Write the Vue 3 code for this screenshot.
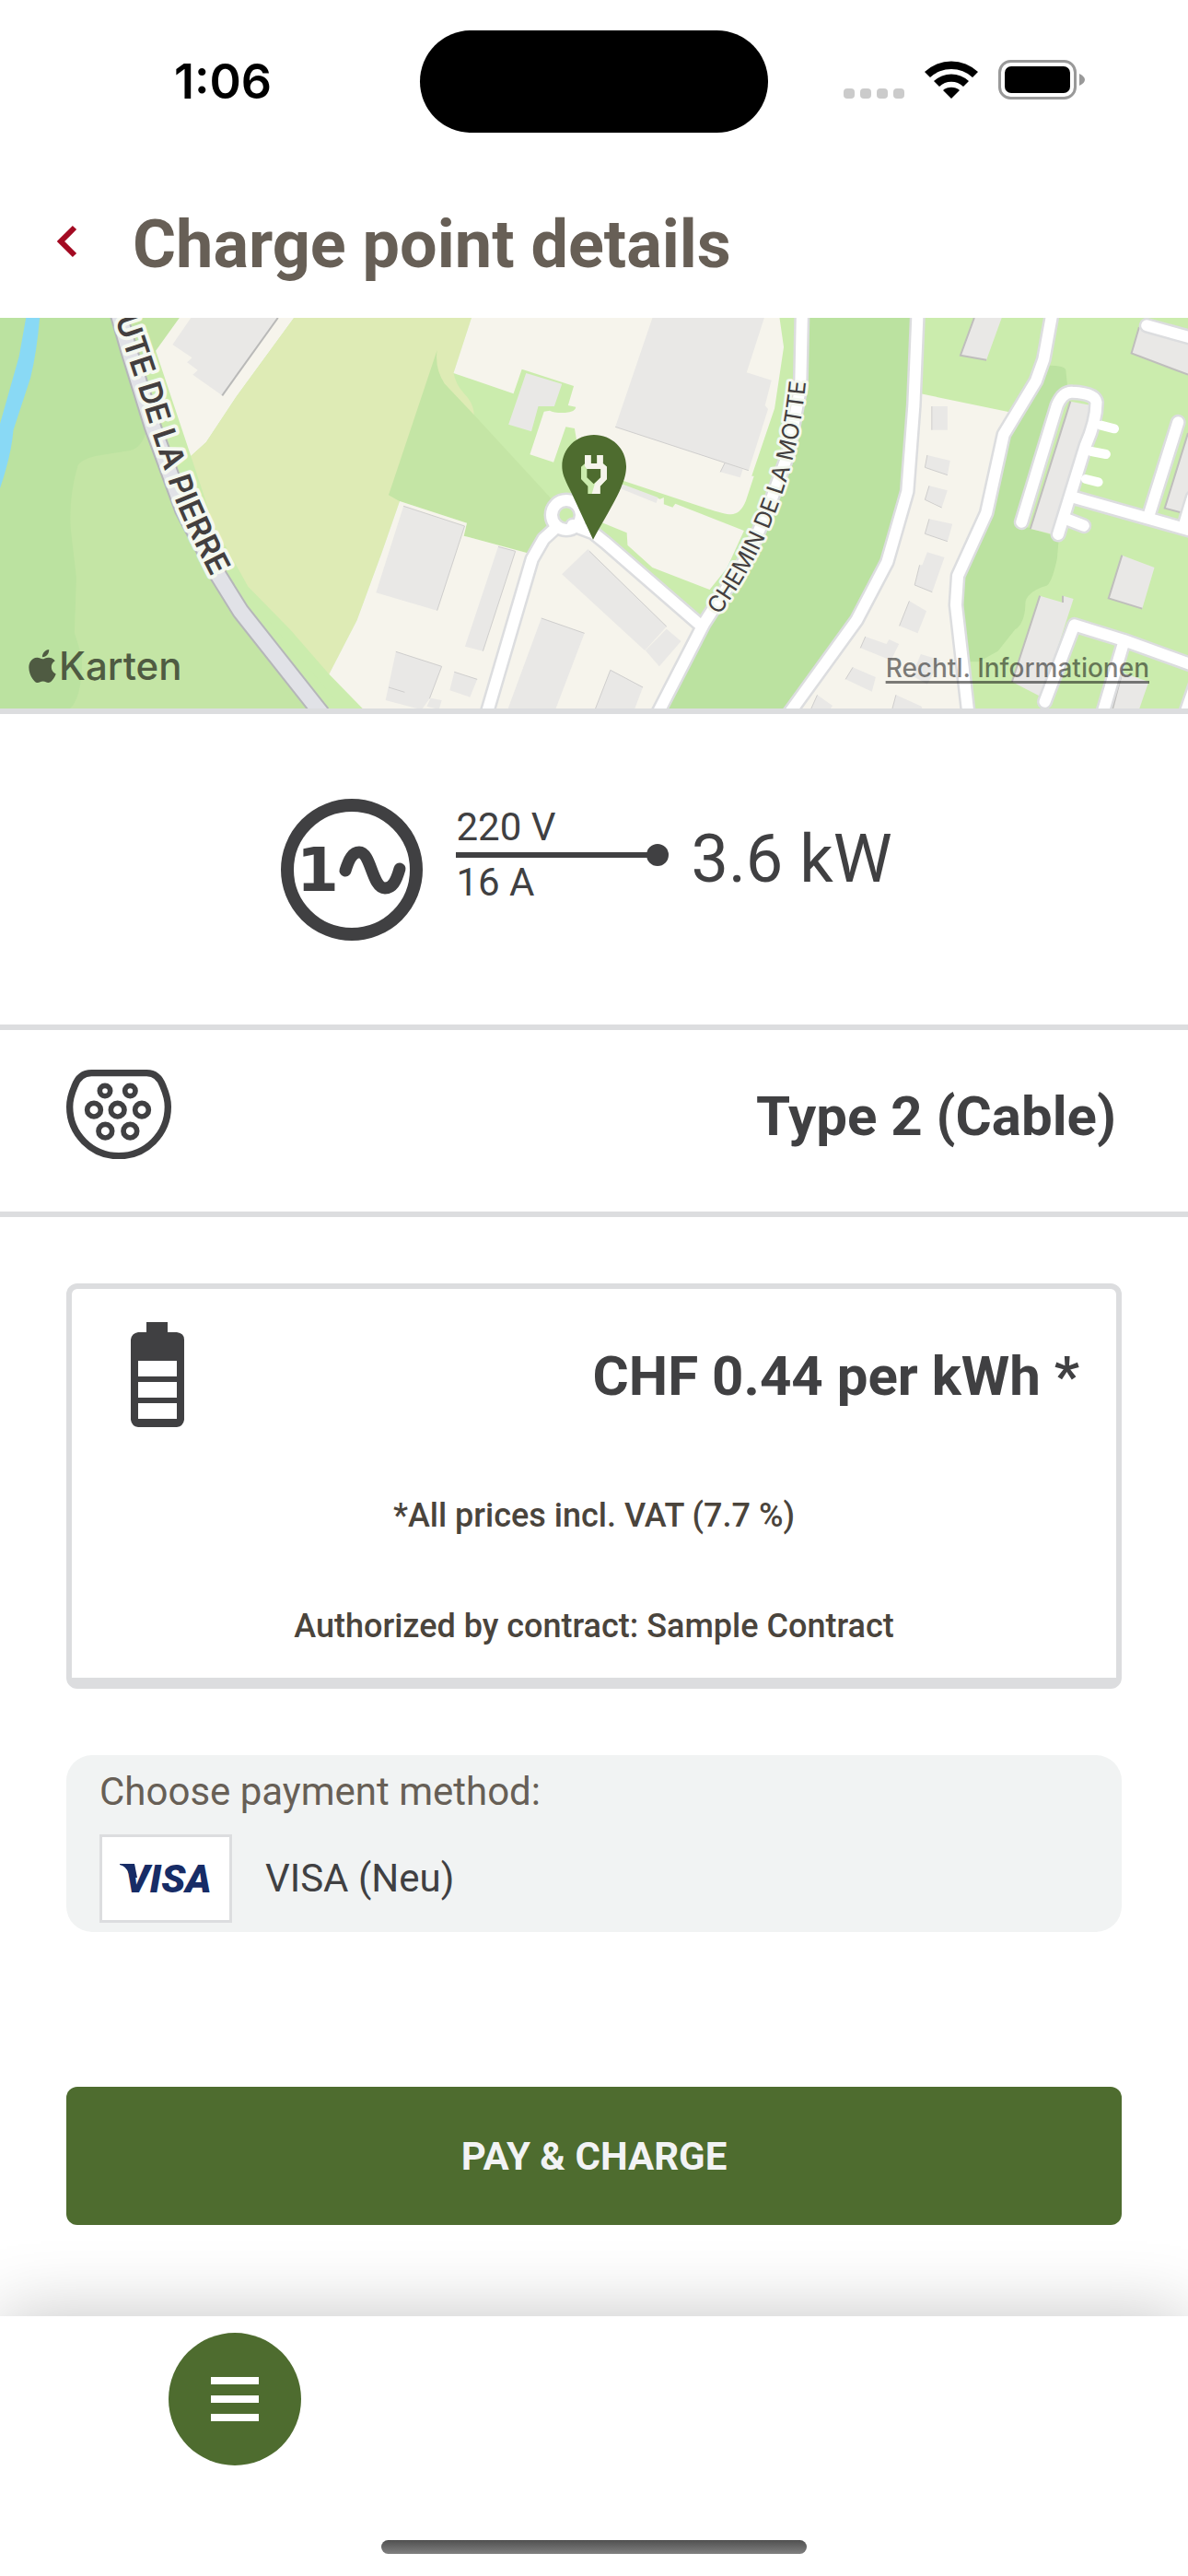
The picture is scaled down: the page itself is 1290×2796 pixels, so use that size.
<script setup>
const buildingsWest = [
  '500,15 728,15 582,268 505,200 518,185 490,160 503,145 452,102',
  '1378,195 1472,230 1452,303 1410,303 1392,385 1332,362',
  '1057,628 1217,693 1145,968 985,910',
  '1305,760 1350,775 1265,1100 1218,1085',
  '1418,993 1531,1042 1455,1290 1330,1290',
  '1037,1102 1157,1150 1125,1255 1105,1290 1085,1285 1010,1260',
  '1190,1168 1250,1192 1231,1250 1178,1228',
  '1128,1253 1157,1260 1150,1290 1118,1280',
  '1540,768 1746,1020 1689,1098 1472,850'
]

const buildingsEast = [
  '202,1028 240,1068 183,1150 147,1098',
  '55,1162 140,1218 118,1290 15,1290',
  '88,557 180,600 175,618 80,570',
  '165,15 458,15 412,193 477,218 460,300 468,312 417,512 68,370',
  '355,487 402,508 395,535 343,517',
  '897,303 938,303 938,380 897,380',
  '885,462 945,480 938,527 879,502',
  '890,562 938,577 923,633 905,620 879,607',
  '890,670 951,686 938,743 879,718',
  '885,778 930,795 898,908 852,885 865,820 872,820',
  '838,937 883,970 860,1042 812,1018',
  '723,1053 778,1077 785,1062 811,1077 790,1130 710,1090',
  '690,1153 750,1185 740,1232 671,1192',
  '868,1110 920,1130 885,1208 845,1180',
  '597,1243 637,1278 630,1290 580,1290',
  '803,1243 870,1280 872,1290 793,1290'
]

const blocksEast = [
  '1008,15 1080,15 1040,152 972,137',
  '1440,45 1568,100 1568,200 1420,130',
  '1260,287 1315,300 1300,420 1215,720 1155,702',
  '1395,788 1480,828 1448,962 1360,928',
  '1180,920 1240,942 1240,920 1268,930 1185,1250 1107,1200',
  '1568,390 1568,655 1507,635',
  '1395,1170 1465,1200 1440,1290 1370,1290'
]

const shadedEdges = [
  'M1008 15L972 137L1040 152',
  'M1440 45L1420 130L1568 200',
  'M1260 287L1155 702',
  'M1395 788L1360 928L1448 962',
  'M1180 920L1107 1200M1240 920V942',
  'M1568 390L1507 635L1568 655',
  'M1395 1170L1370 1290'
]

const roads = [
  'M557 0L553 240L520 460L470 630L420 780L300 1010L180 1300',
  'M860 0L850 300L833 580L780 810L700 1000L525 1300',
  'M1212 0L1190 150L1170 220L1085 395L1040 650L965 855L960 950L992 1300',
  'M-44 690L10 715L40 745L290 1015',
  'M-89 700L-120 735L-150 800L-268 1300',
  'M1132 680L1225 300Q1240 255 1265 257Q1325 260 1328 290Q1328 350 1300 430L1228 720',
  'M1250 670L1295 692',
  'M1270 600L1600 716M1465 660L1542 355M1558 690L1580 600',
  'M1193 1265L1270 1015L1400 1065L1600 1155M1400 1070L1345 1300M1590 1200L1562 1300',
  'M1460 40L1600 88'
]
const stubs = 'M1340 365L1375 376M1315 450L1353 459M1300 540L1333 550'
</script>

<template>
  <div class="page">
    <div class="status">
      <div class="time">1:06</div>
      <div class="island"></div>
      <div class="indicators">
        <svg width="66" height="43" viewBox="0 0 66 43" aria-hidden="true">
          <g fill="#cbcbcb">
            <rect x="0" y="31" width="12" height="11" rx="4" />
            <rect x="18" y="31" width="12" height="11" rx="4" />
            <rect x="36" y="31" width="12" height="11" rx="4" />
            <rect x="54" y="31" width="12" height="11" rx="4" />
          </g>
        </svg>
        <svg width="58" height="43" viewBox="0 0 58 43" aria-hidden="true">
          <path d="M0 13A42 42 0 0 1 58 13L52 19A34 34 0 0 0 6 19Z" />
          <path d="M10 23A28 28 0 0 1 48 23L42 29A19 19 0 0 0 16 29Z" />
          <path d="M20 33A14 14 0 0 1 38 33L29 42Z" />
        </svg>
        <svg width="94" height="43" viewBox="0 0 94 43" aria-hidden="true">
          <rect x="1.5" y="1.5" width="82" height="40" rx="12" fill="none" stroke="#999" stroke-width="3" />
          <rect x="7" y="7" width="71" height="29" rx="7" />
          <path d="M88 15Q94 18 94 21.500T88 28Z" fill="#999" />
        </svg>
      </div>
    </div>

    <header class="header">
      <button class="back" aria-label="Back">
        <svg width="22" height="36" viewBox="0 0 22 36"><path d="M19 3L4 18L19 33" fill="none" stroke="#a30a22" stroke-width="6" /></svg>
      </button>
      <h1>Charge point details</h1>
    </header>

    <section class="map">
      <svg class="map-canvas" viewBox="0 345 1290 424" preserveAspectRatio="xMidYMid slice" role="img" aria-label="Map">
        <rect x="0" y="345" width="1290" height="424" fill="#cbecad" />
        <g transform="translate(0 340) scale(.41454 .33333)">
          <path fill="#c4e5a5" d="M0 15H470L408 122L400 400L480 620L560 860L620 980L830 1290H0Z" />
          <path fill="#cbecad" d="M408 122L520 600L600 850L900 1290L820 1290L560 860L400 400L380 200Z" />
          <path fill="#bbe2a0" d="M0 15H300L385 380Q370 440 340 447L250 465Q205 480 203 500Q180 600 185 700L200 860L195 1040L215 1120Q215 1260 180 1290H0Z" />
          <path fill="#89d9f5" d="M68 15H104Q96 130 80 210L35 380Q30 460 0 570V360L50 140Z" />
          <path fill="#f6f4ec" d="M470 15H770L620 270L540 420L500 465L408 122Z" />
          <path fill="#deebb5" d="M770 15H1235L1188 195Q1195 235 1215 260Q1242 295 1242 335L1165 230L1018 592L1047 612L1000 780L935 1000L862 1175L760 1030L650 890L560 690L500 465L540 420L620 270Z" />
          <path fill="#c4e5a5" d="M1145 120Q1138 180 1165 230L1245 335L1445 605V700L1395 785L1215 725L1223 683L1047 612L1018 592Z" />
          <path fill="#f6f4ec" d="M1047 612L1223 683L1215 725L1395 785L1445 700L1560 715L1834 1020L1715 1290H952L862 1175L935 1000L1000 780Z" />
          <path fill="#f6f4ec" d="M1235 15H2042L2053 110L2029 310L1969 530H1975L1954 610Q1940 655 1914 655Q1900 655 1850 635L1632 545L1510 410L1505 375L1482 370L1450 485L1388 460L1425 320L1440 317Q1450 325 1480 324Q1510 320 1508 305L1488 300L1503 237L1367 182L1345 262L1188 195Z" />
          <polygon v-for="b in buildingsWest" :key="b" :points="b" fill="#e9e8e6" />
          <g class="fine" stroke="#b9b9b8" stroke-width="2"><path d="M728 15L582 268" /></g>
          <g class="fine" stroke="#cfcecd" stroke-width="1">
            <path d="M1057 628L1217 693L1145 968M1418 993L1531 1042M1037 1102L1157 1150L1125 1255M1190 1168L1250 1192M1305 760L1350 775L1265 1100M1018 1218L1060 1234" />
          </g>
        </g>
        <g transform="translate(640 340) scale(.41454 .33333)">
          <path fill="#f6f4ec" d="M60 545L185 605L195 600V622L218 632L225 620L405 708L360 830L315 900L165 828L100 755L98 715L20 675Z" />
          <path fill="#bbe2a0" d="M565 15H850L820 570L770 800L690 1000L515 1290H205L300 1020L430 790L500 560L555 260Z" />
          <path fill="#f6f4ec" d="M868 262L1100 322L1075 400L1030 650L950 850L945 950L975 1290H540L710 1000L790 800L845 580Z" />
          <path fill="#bbe2a0" d="M1205 170Q1245 170 1248 185L1252 235L1220 300L1130 690L1230 730L1225 800Q1210 885 1195 888Q1140 910 1142 950Q1140 1010 1115 1030L1070 1100L1020 1135H985L960 950L965 860L1050 640L1090 400L1190 220Z" />
          <polygon v-for="b in buildingsEast" :key="b" :points="b" fill="#e9e8e6" />
          <polygon v-for="b in blocksEast" :key="b" :points="b" fill="#e9e8e6" />
          <g class="fine" stroke="#bfbebc" stroke-width="2"><path v-for="e in shadedEdges" :key="e" :d="e" /></g>
          <g class="fine" stroke="#cfcecd" stroke-width="1">
            <path d="M68 370L417 512M355 487L343 517M897 303V380M885 462L879 502L938 527M890 562L879 607L923 633M890 670L879 718L938 743M865 820L852 885L898 908M838 937L812 1018M723 1053L710 1090M690 1153L671 1192M55 1162L15 1290M55 1162L140 1218M803 1243L793 1290M597 1243L580 1290M0 775L202 1020" />
          </g>
          <g class="road" stroke="#dcdddf" stroke-width="17"><path v-for="r in roads" :key="r" :d="r" /></g>
          <g class="road" stroke="#ffffff" stroke-width="10"><path :d="stubs" /></g>
        </g>
        <circle cx="615" cy="559" r="16" fill="none" stroke="#dcdddf" stroke-width="17" />
        <g transform="translate(640 340) scale(.41454 .33333)">
          <g class="road" stroke="#ffffff" stroke-width="12"><path v-for="r in roads" :key="r" :d="r" /></g>
        </g>
        <circle cx="615" cy="559" r="16" fill="none" stroke="#ffffff" stroke-width="12" />
        <g transform="translate(0 340) scale(.41454 .33333)" class="road">
          <path d="M310 0L340 130L400 370L480 640L570 850L630 970L840 1300" stroke="#b5b6b9" stroke-width="20" />
          <path d="M310 0L340 130L400 370L480 640L570 850L630 970L840 1300" stroke="#e1e2e7" stroke-width="16" />
        </g>
        <path id="label-west" fill="none" d="M125 346L138 385L153 430L168 478L186 532Q205 582 250 665" />
        <path id="label-east" fill="none" d="M781 668Q870 545 877 385" />
        <text class="road-name west"><textPath href="#label-west">UTE DE LA PIERRE</textPath></text>
        <text class="road-name east"><textPath href="#label-east">CHEMIN DE LA MOTTE</textPath></text>
        <g transform="translate(540 440) scale(.33333)">
          <path fill="#4e6c2f" fill-rule="evenodd" d="M312 437L243 288C222 245 211 225 211 198C211 140 258 96 315 96C372 96 420 140 420 198C420 225 412 247 398 280C380 320 340 385 312 437ZM285 162V190L273 200V240L295 263V288H335V263L357 240V200L344 189V162H325V189H305V162ZM292 207H337V235L314 256L292 235Z" />
          <path fill="#f6f4ec" d="M325 162H344V189L357 200V240L335 263V288H308L318 254L337 235V207H292L285 198L285 162H305V189H325Z" />
        </g>
      </svg>
      <div class="brand">
        <svg width="36" height="36" viewBox="0 0 24 24" aria-hidden="true"><path fill="#4f5b42" d="M12.152 6.896c-.948 0-2.415-1.078-3.960-1.040-2.040.027-3.910 1.183-4.961 3.014-2.117 3.675-.546 9.103 1.519 12.090 1.013 1.454 2.208 3.090 3.792 3.039 1.520-.065 2.090-.987 3.935-.987 1.831 0 2.350.987 3.960.948 1.637-.026 2.676-1.480 3.676-2.948 1.156-1.688 1.636-3.325 1.662-3.415-.039-.013-3.182-1.221-3.220-4.857-.026-3.040 2.480-4.494 2.597-4.559-1.429-2.090-3.623-2.324-4.390-2.376-2-.156-3.675 1.090-4.610 1.090zM15.530 3.830c.843-1.012 1.400-2.427 1.245-3.830-1.207.052-2.662.805-3.532 1.818-.780.896-1.454 2.338-1.273 3.714 1.338.104 2.715-.688 3.559-1.701" /></svg>
        <span>Karten</span>
      </div>
      <a class="legal" href="#">Rechtl. Informationen</a>
    </section>

    <section class="power">
      <svg width="154" height="154" viewBox="0 0 154 154" aria-label="Single phase AC" role="img">
        <circle cx="77" cy="77" r="70" fill="none" stroke="#404042" stroke-width="14" />
        <text class="phase" x="17" y="100">1</text>
        <path d="M70 78C74 65 78 58 85 58C98 58 99 97 113 97C121 97 125 90 129 76" fill="none" stroke="#404042" stroke-width="13" stroke-linecap="round" />
      </svg>
      <div class="supply">
        <span>220 V</span>
        <svg width="231" height="24" viewBox="0 0 231 24" aria-hidden="true">
          <path d="M0 9H215V15H0Z" fill="#404042" /><circle cx="219" cy="12" r="12" fill="#404042" />
        </svg>
        <span>16 A</span>
      </div>
      <div class="kw">3.6 kW</div>
    </section>

    <section class="plug">
      <svg width="114" height="97" viewBox="96 91 342 291" aria-hidden="true">
        <g fill="none" stroke="#404042">
          <path stroke-width="22" d="M178 102H358C385 102 402 120 411 145C421 168 427 190 427 212A160 160 0 0 1 107 212C107 190 113 168 123 145C132 120 150 102 178 102Z" />
          <g stroke-width="17"><circle cx="222" cy="160" r="17" /><circle cx="304" cy="160" r="17" /></g>
          <g stroke-width="17"><circle cx="186" cy="222" r="22" /><circle cx="263" cy="222" r="22" /><circle cx="342" cy="222" r="22" /><circle cx="223" cy="291" r="22" /><circle cx="304" cy="291" r="22" /></g>
        </g>
      </svg>
      <h2>Type 2 (Cable)</h2>
    </section>

    <main class="content">
      <section class="tariff">
        <div class="price">
          <svg width="58" height="114" viewBox="0 0 58 114" aria-hidden="true">
            <path fill="#404042" fill-rule="evenodd" d="M17 0H40V11H50Q58 12 58 19V106Q57 113 50 114H8Q1 113 0 106V19Q1 12 8 11H17ZM8 42V59H50V42ZM8 65V82H50V65ZM8 88V105H50V88Z" />
          </svg>
          <h2>CHF 0.44 per kWh *</h2>
        </div>
        <p>*All prices incl. VAT (7.7 %)</p>
        <p>Authorized by contract: Sample Contract</p>
      </section>

      <button class="payment">
        <span class="payment-label">Choose payment method:</span>
        <span class="method">
          <span class="card-logo">
            <svg width="108" height="60" viewBox="-4 -13 108 60" role="img" aria-label="Visa">
              <path d="M0 1H16L19 16H11Q9 4 0 2Z" fill="#172c66" />
              <text class="visa" x="5" y="32">VISA</text>
            </svg>
          </span>
          <span>VISA (Neu)</span>
        </span>
      </button>

      <button class="pay">PAY &amp; CHARGE</button>
    </main>

    <footer class="footer">
      <button class="menu" aria-label="Menu">
        <svg width="52" height="48" viewBox="0 0 52 48"><path d="M0 0H52V8H0ZM0 20H52V28H0ZM0 40H52V48H0Z" fill="#fff" /></svg>
      </button>
      <div class="home"></div>
    </footer>
  </div>
</template>

<style>
body {
  margin: 0;
  background: #fff;
}
</style>

<style scoped>
.page {
  min-height: 100vh;
  display: flex;
  flex-direction: column;
  overflow: hidden;
  background: #fff;
  color: #404042;
  font-family: Roboto, "Liberation Sans", sans-serif;
}
.page * {
  box-sizing: border-box;
}
svg {
  display: block;
  flex: none;
}
button {
  border: 0;
  padding: 0;
  background: none;
  color: inherit;
  font: inherit;
}
h1,
h2,
p {
  margin: 0;
}
.status {
  display: grid;
  grid-template-columns: 1fr 378px 1fr;
  align-items: center;
  padding-top: 33px;
}
.time {
  padding-left: 28px;
  text-align: center;
  color: #000;
  font: 600 52px/60px Inter, sans-serif;
}
.island {
  height: 111px;
  border-radius: 56px;
  background: #000;
}
.indicators {
  display: flex;
  justify-content: flex-end;
  gap: 22px;
  padding: 0 112px 4px 0;
}
.header {
  display: flex;
  align-items: center;
  gap: 60px;
  height: 201px;
  padding: 34px 62px 0;
}
.header h1 {
  padding-top: 8px;
  color: #675f56;
  font-size: 72px;
  line-height: 84px;
}
.map {
  position: relative;
  border-bottom: 6px solid #dcdddf;
}
.map-canvas {
  width: 100%;
  height: 424px;
}
.fine path,
.road path {
  fill: none;
  vector-effect: non-scaling-stroke;
}
.road path {
  stroke-linecap: round;
  stroke-linejoin: round;
}
.road-name {
  fill: #433f3f;
  stroke: #f4f8f0;
  paint-order: stroke;
  stroke-linejoin: round;
  font-family: Inter, sans-serif;
}
.west {
  font-size: 34px;
  font-weight: 600;
  stroke-width: 8px;
}
.east {
  font-size: 25px;
  font-weight: 400;
  stroke-width: 6px;
}
.brand {
  position: absolute;
  left: 28px;
  bottom: 20px;
  display: flex;
  align-items: center;
  color: #4f5b42;
  font: 500 42px/52px Inter, sans-serif;
}
.legal {
  position: absolute;
  right: 42px;
  bottom: 24px;
  color: rgba(0, 0, 0, 0.5);
  font: 500 28px/40px Inter, sans-serif;
  text-decoration-thickness: 3px;
  text-underline-offset: 4px;
}
.power {
  display: flex;
  align-items: center;
  justify-content: center;
  height: 343px;
  padding-right: 16px;
  border-bottom: 6px solid #dcdddf;
}
.phase {
  fill: #404042;
  font: 700 66px "DejaVu Sans", sans-serif;
}
.supply {
  display: flex;
  flex-direction: column;
  margin: 0 24px 0 36px;
  padding-bottom: 32px;
  font-size: 42px;
  line-height: 36px;
}
.kw {
  padding-bottom: 22px;
  font-size: 72px;
  line-height: 84px;
}
.plug {
  display: flex;
  align-items: center;
  justify-content: space-between;
  height: 203px;
  padding: 0 78px 14px 72px;
  border-bottom: 6px solid #dcdddf;
}
h2 {
  padding-top: 4px;
  font-size: 60px;
  line-height: 72px;
}
.content {
  display: flex;
  flex-direction: column;
  padding: 72px 72px 99px;
}
.tariff {
  padding-bottom: 32px;
  border: 6px solid #dcdddf;
  border-bottom-width: 12px;
  border-radius: 12px;
  color: #4a443c;
  text-align: center;
  font-size: 36px;
  font-weight: 500;
  line-height: 48px;
}
.tariff p {
  margin-top: 72px;
}
.price {
  display: flex;
  align-items: center;
  justify-content: space-between;
  padding: 36px 40px 0 64px;
  color: #404042;
}
.payment {
  display: flex;
  flex-direction: column;
  gap: 22px;
  margin-top: 72px;
  padding: 16px 36px 10px;
  border-radius: 28px;
  background: #f1f3f3;
  text-align: left;
  font-size: 42px;
  line-height: 48px;
}
.payment-label {
  color: #675f56;
}
.method {
  display: flex;
  align-items: center;
  gap: 36px;
}
.card-logo {
  display: flex;
  align-items: center;
  justify-content: center;
  width: 144px;
  height: 96px;
  border: 3px solid #dcdddf;
  background: #fff;
}
.visa {
  fill: #172c66;
  font: italic 900 43px Roboto, sans-serif;
}
.pay {
  height: 150px;
  margin-top: 168px;
  border-radius: 12px;
  background: #4e6c2f;
  color: #f2f3f4;
  font-size: 42px;
  font-weight: 700;
}
.footer {
  display: flex;
  flex-direction: column;
  justify-content: space-between;
  height: 282px;
  margin-top: auto;
  padding: 18px 183px 24px;
  background: #fff;
  box-shadow: 0 0 75px rgba(0, 0, 0, 0.23);
}
.menu {
  display: flex;
  align-items: center;
  justify-content: center;
  width: 144px;
  height: 144px;
  border-radius: 50%;
  background: #4e6c2f;
}
.home {
  align-self: center;
  width: 462px;
  height: 15px;
  border-radius: 8px;
  background: linear-gradient(#505050, #808080);
}
</style>
